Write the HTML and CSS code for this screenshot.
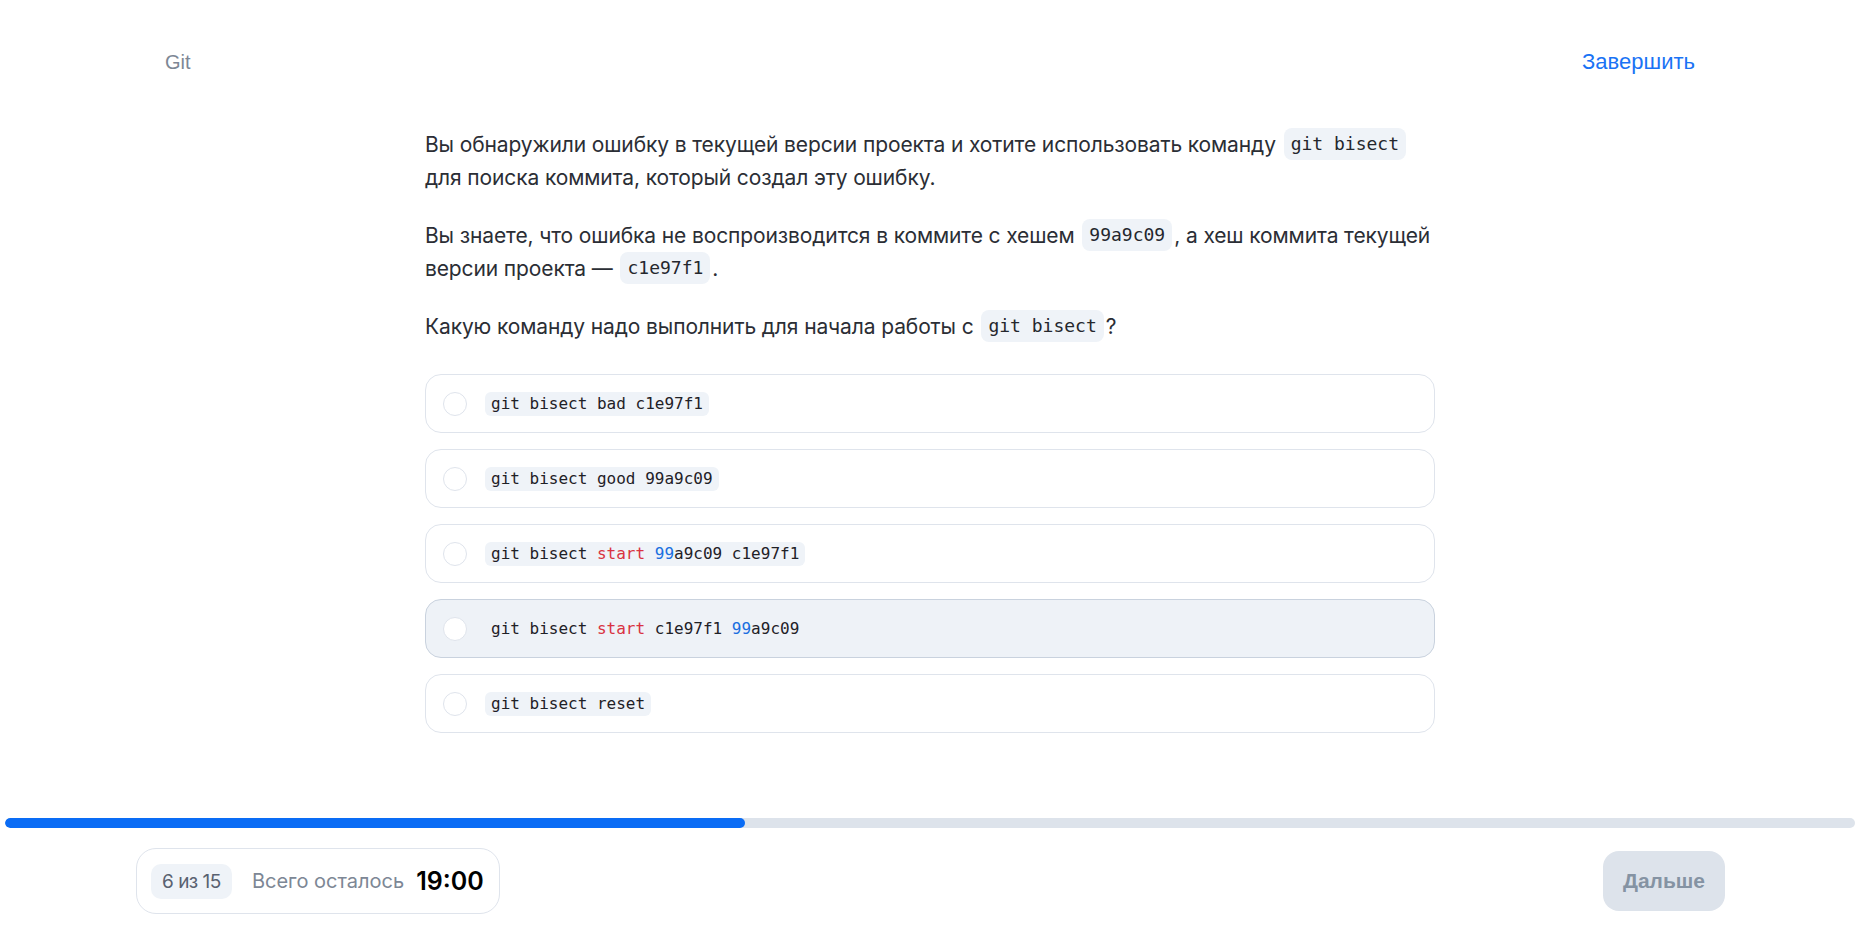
FILE: index.html
```html
<!DOCTYPE html>
<html lang="ru">
<head>
<meta charset="utf-8">
<title>Git — тест</title>
<link rel="stylesheet" href="styles.css">
</head>
<body>
<div class="page">
  <header class="header">
    <span class="topic">Git</span>
    <a class="finish" href="#">Завершить</a>
  </header>
  <main class="main">
    <div class="question">
      <p>Вы обнаружили ошибку в текущей версии проекта и хотите использовать команду <code class="ic">git bisect</code> для поиска коммита, который создал эту ошибку.</p>
      <p>Вы знаете, что ошибка не воспроизводится в коммите с хешем <code class="ic">99a9c09</code>, а хеш коммита текущей версии проекта — <code class="ic">c1e97f1</code>.</p>
      <p>Какую команду надо выполнить для начала работы с <code class="ic">git bisect</code>?</p>
    </div>
    <div class="options">
      <label class="option"><span class="radio"></span><code class="oc">git bisect bad c1e97f1</code></label>
      <label class="option"><span class="radio"></span><code class="oc">git bisect good 99a9c09</code></label>
      <label class="option"><span class="radio"></span><code class="oc">git bisect <span class="kw">start</span> <span class="num">99</span>a9c09 c1e97f1</code></label>
      <label class="option option-active"><span class="radio"></span><code class="oc">git bisect <span class="kw">start</span> c1e97f1 <span class="num">99</span>a9c09</code></label>
      <label class="option"><span class="radio"></span><code class="oc">git bisect reset</code></label>
    </div>
  </main>
  <footer class="footer">
    <div class="progress"><div class="progress-fill" style="width:40%"></div></div>
    <div class="footer-row">
      <div class="status">
        <span class="counter">6 из 15</span>
        <span class="remain">Всего осталось</span>
        <span class="time">19:00</span>
      </div>
      <button class="next" type="button">Дальше</button>
    </div>
  </footer>
</div>
</body>
</html>
```

FILE: styles.css
```css
* { box-sizing: border-box; }
html, body { margin: 0; padding: 0; background: #fff; }
body { font-family: Inter, "Noto Sans", sans-serif; color: #2b2e35; }

.page {
  height: 100vh;
  display: flex;
  flex-direction: column;
}

.header {
  height: 124px;
  padding: 0 165px;
  display: flex;
  align-items: center;
  justify-content: space-between;
  font-family: "Liberation Sans", Arial, sans-serif;
  font-size: 20px;
}
.topic { color: #7d8795; }
.finish { color: #1a73f5; text-decoration: none; font-size: 22px; }

.main {
  flex: 1;
  width: 1010px;
  margin: 0 auto;
}

.question { padding-top: 4px; }
.question p {
  margin: 0 0 25px;
  font-size: 21px;
  line-height: 33px;
  letter-spacing: -0.12px;
}
.question p:last-child { margin-bottom: 31px; }

code { font-family: "DejaVu Sans Mono", "Liberation Mono", monospace; letter-spacing: 0; }

.ic {
  display: inline-block;
  font-size: 18px;
  line-height: 32px;
  height: 32px;
  padding: 0 7px;
  margin: 0 2px;
  border-radius: 8px;
  background: #eff3f8;
  vertical-align: top;
  color: #25272d;
}

.options { display: flex; flex-direction: column; gap: 16px; }
.option {
  height: 59px;
  border: 1px solid #dfe4ec;
  border-radius: 16px;
  padding: 0 17px;
  display: flex;
  align-items: center;
  gap: 18px;
  cursor: pointer;
}
.option-active { background: #eef2f7; border-color: #c9d2de; }
.radio {
  width: 24px;
  height: 24px;
  border-radius: 50%;
  border: 1.5px solid #dfe4ec;
  background: #fff;
  flex: none;
}
.oc {
  font-size: 16px;
  line-height: 24px;
  padding: 0 6px;
  border-radius: 6px;
  background: #eff3f8;
  color: #1f2127;
}
.option-active .oc { background: transparent; }
.kw { color: #d93342; }
.num { color: #1a6fe0; }

.footer { padding: 0 5px 21px; }
.progress {
  height: 10px;
  border-radius: 5px;
  background: #dde3eb;
  overflow: hidden;
}
.progress-fill { height: 100%; background: #0a6cf5; border-radius: 5px; }

.footer-row {
  margin-top: 20px;
  padding: 0 130px 0 131px;
  display: flex;
  align-items: center;
  justify-content: space-between;
}
.status {
  height: 66px;
  border: 1px solid #dfe4ec;
  border-radius: 20px;
  padding: 0 15px 0 14px;
  display: flex;
  align-items: center;
}
.counter {
  background: #eff3f8;
  border-radius: 10px;
  height: 35px;
  line-height: 35px;
  padding: 0 11px;
  font-size: 19px;
  color: #596170;
  letter-spacing: -0.5px;
}
.remain {
  margin-left: 20px;
  font-size: 20px;
  color: #7d8795;
}
.time {
  margin-left: 12px;
  font-size: 25px;
  font-weight: 600;
  color: #000;
}
.next {
  width: 122px;
  height: 60px;
  border: 0;
  border-radius: 16px;
  background: #dde3eb;
  color: #8593a3;
  font-family: "Liberation Sans", Arial, sans-serif;
  font-weight: bold;
  font-size: 21px;
  cursor: pointer;
}
```
